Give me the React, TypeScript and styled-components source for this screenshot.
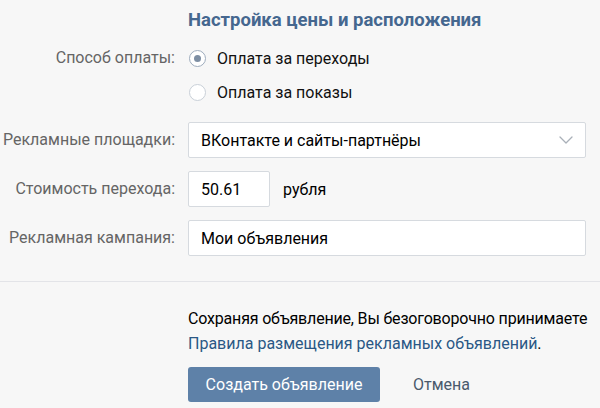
import React from "react";
import styled, { createGlobalStyle } from "styled-components";

const GlobalStyle = createGlobalStyle`
  html, body {
    margin: 0;
    padding: 0;
    background: #f7f7f7;
  }
  body {
    font-family: Roboto, "Liberation Sans", Arial, sans-serif;
    -webkit-font-smoothing: antialiased;
  }
`;

const Page = styled.div`
  width: 600px;
  height: 408px;
  background: #f7f7f7;
  overflow: hidden;
  display: flex;
  flex-direction: column;
`;

const Form = styled.div`
  display: flex;
  flex-direction: column;
  padding: 10px 14px 0 0;
`;

const Row = styled.div<{ $top?: number; $alignStart?: boolean }>`
  display: grid;
  grid-template-columns: 175px 1fr;
  column-gap: 13px;
  align-items: ${(p) => (p.$alignStart ? "start" : "center")};
  margin-top: ${(p) => p.$top ?? 0}px;
`;

const Title = styled.h2`
  grid-column: 2;
  margin: 0;
  font-size: 18.5px;
  line-height: 20px;
  font-weight: 700;
  color: #45678f;
  white-space: nowrap;
`;

const Label = styled.div<{ $lh?: number }>`
  text-align: right;
  font-size: 16px;
  line-height: ${(p) => p.$lh ?? 20}px;
  color: #656565;
  white-space: nowrap;
`;

const RadioGroup = styled.div`
  display: flex;
  flex-direction: column;
  gap: 10px;
`;

const RadioOption = styled.label`
  display: flex;
  align-items: center;
  gap: 11px;
  height: 24px;
  font-size: 16px;
  color: #111;
  cursor: pointer;
`;

const RadioCircle = styled.span<{ $checked?: boolean }>`
  box-sizing: border-box;
  width: 17px;
  height: 17px;
  margin-left: 1px;
  border-radius: 50%;
  border: 1px solid ${(p) => (p.$checked ? "#9eacbd" : "#c9d0d8")};
  background: #fff;
  display: flex;
  align-items: center;
  justify-content: center;
  &::after {
    content: "";
    width: 7px;
    height: 7px;
    border-radius: 50%;
    background: ${(p) => (p.$checked ? "#7d8ea3" : "transparent")};
  }
`;

const Field = styled.div<{ $width?: number }>`
  box-sizing: border-box;
  height: 36px;
  width: ${(p) => (p.$width ? `${p.$width}px` : "100%")};
  background: #fff;
  border: 1px solid #d6dadf;
  border-radius: 2px;
  padding: 0 12px;
  display: flex;
  align-items: center;
  justify-content: space-between;
  font-size: 16px;
  color: #000;
`;

const Inline = styled.div`
  display: flex;
  align-items: center;
  gap: 13px;
  font-size: 16px;
  color: #000;
`;

const Divider = styled.div`
  height: 1px;
  background: #e3e4e8;
  margin-top: 25px;
`;

const Footer = styled.div`
  padding: 24px 0 0 188px;
  display: flex;
  flex-direction: column;
`;

const Note = styled.div<{ $tight?: boolean }>`
  font-size: 16px;
  line-height: 25px;
  color: #000;
  white-space: nowrap;
  letter-spacing: ${(p) => (p.$tight ? "-0.18px" : "0")};
`;

const Link = styled.a`
  color: #2a5885;
  text-decoration: none;
`;

const Actions = styled.div`
  display: flex;
  align-items: center;
  gap: 33px;
  margin-top: 11px;
`;

const PrimaryButton = styled.button`
  box-sizing: border-box;
  height: 35px;
  width: 192px;
  border: none;
  border-radius: 3px;
  background: #5e81a8;
  color: #fff;
  font-family: inherit;
  font-size: 16px;
  padding: 0;
`;

const TextButton = styled.button`
  border: none;
  background: none;
  padding: 0;
  font-family: inherit;
  font-size: 16px;
  color: #4a5a6c;
`;

const Chevron = () => (
  <svg width="14" height="8" viewBox="0 0 14 8" fill="none">
    <path d="M1 1l6 6 6-6" stroke="#a9b0b8" strokeWidth="1.3" strokeLinecap="round" strokeLinejoin="round" />
  </svg>
);

export default function App() {
  return (
    <Page>
      <GlobalStyle />
      <Form>
        <Row>
          <Title>Настройка цены и расположения</Title>
        </Row>
        <Row $top={16} $alignStart>
          <Label $lh={24}>Способ оплаты:</Label>
          <RadioGroup>
            <RadioOption>
              <RadioCircle $checked />
              Оплата за переходы
            </RadioOption>
            <RadioOption>
              <RadioCircle />
              Оплата за показы
            </RadioOption>
          </RadioGroup>
        </Row>
        <Row $top={18}>
          <Label>Рекламные площадки:</Label>
          <Field>
            <span>ВКонтакте и сайты-партнёры</span>
            <Chevron />
          </Field>
        </Row>
        <Row $top={13}>
          <Label>Стоимость перехода:</Label>
          <Inline>
            <Field $width={82}>50.61</Field>
            <span>рубля</span>
          </Inline>
        </Row>
        <Row $top={13}>
          <Label>Рекламная кампания:</Label>
          <Field>Мои объявления</Field>
        </Row>
      </Form>
      <Divider />
      <Footer>
        <Note $tight>Сохраняя объявление, Вы безоговорочно принимаете</Note>
        <Note>
          <Link href="#">Правила размещения рекламных объявлений</Link>.
        </Note>
        <Actions>
          <PrimaryButton>Создать объявление</PrimaryButton>
          <TextButton>Отмена</TextButton>
        </Actions>
      </Footer>
    </Page>
  );
}
